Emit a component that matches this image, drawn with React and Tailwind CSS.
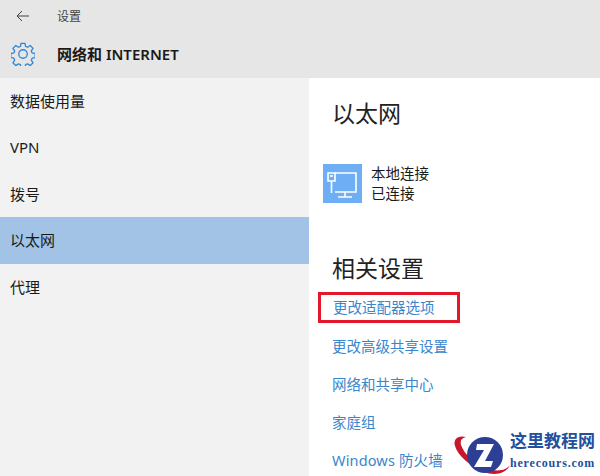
import React from 'react'

const font = { fontFamily: '"Noto Sans", "Noto Sans CJK SC", sans-serif' }

const navItems = ['数据使用量', 'VPN', '拨号', '以太网', '代理']

const GearIcon = () => (
    <svg width="24" height="24" viewBox="0 0 26 26" fill="none" stroke="#2f86d6" strokeWidth="1.4" strokeLinejoin="round">
        <path d="M10.8 1.5h4.4l.6 3.3 2.2.9 2.8-1.9 3.1 3.1-1.9 2.8.9 2.2 3.3.6v4.4l-3.3.6-.9 2.2 1.9 2.8-3.1 3.1-2.8-1.9-2.2.9-.6 3.3h-4.4l-.6-3.3-2.2-.9-2.8 1.9-3.1-3.1 1.9-2.8-.9-2.2-3.3-.6v-4.4l3.3-.6.9-2.2-1.9-2.8 3.1-3.1 2.8 1.9 2.2-.9z" />
        <circle cx="13" cy="13" r="4.6" />
    </svg>
)

const NetworkIcon = () => (
    <div className="w-[39px] h-[39px] bg-[#6eaef5] flex items-center justify-center">
        <svg width="39" height="39" viewBox="0 0 39 39" fill="none" stroke="#fff" strokeWidth="1.6">
            <path d="M12 9h21v19H12" />
            <path d="M5 9h7v8H5z" />
            <path d="M7 12h3" />
            <path d="M8.5 17v12" />
            <path d="M22 28v5M15 33h14" />
        </svg>
    </div>
)

const Logo = () => (
    <div className="absolute right-0 bottom-0 w-[148px] h-[52px] flex items-center">
        <svg width="58" height="52" viewBox="0 0 58 52" className="shrink-0">
            <path d="M14 13C6 11 1 15 3 22c3 10 15 20 29 26 10 4 22 2 26-7-4 6-14 7-24 3C22 39 12 30 9 21c-1-5 1-7 5-8z" fill="#c5182a" />
            <circle cx="33" cy="31" r="18" fill="#2d3f94" />
            <path d="M25 20h17L33 37h8l-2 6H22l10-17h-8z" fill="#fff" />
        </svg>
        <div className="flex flex-col items-center font-['Liberation_Serif','Noto_Sans_CJK_SC',serif]">
            <span className="text-[17px] leading-[24px] font-bold text-[#22509c] whitespace-nowrap">这里教程网</span>
            <span className="text-[12px] leading-[14px] mt-[2px] font-bold text-[#22509c] tracking-[0.8px]">herecours.com</span>
        </div>
    </div>
)

export default function App() {
    return (
        <div className="relative w-[600px] h-[476px] overflow-hidden flex flex-col bg-white text-[#1a1a1a]" style={font}>
            <header className="h-[78px] shrink-0 bg-[#e6e6e6] flex flex-col">
                <div className="h-[32px] flex items-center pl-[16px] gap-[28px]">
                    <svg width="13" height="12" viewBox="0 0 13 12" fill="none" stroke="#444" strokeWidth="1">
                        <path d="M13 6H1M6 1 1 6l5 5" />
                    </svg>
                    <span className="text-[12px] text-[#444] pt-[1px]">设置</span>
                </div>
                <div className="flex-1 flex items-center pl-[11px] gap-[22px] pb-[2px]">
                    <GearIcon />
                    <span className="text-[15px] font-semibold">网络和 INTERNET</span>
                </div>
            </header>
            <div className="flex-1 flex min-h-0">
                <nav className="w-[309px] shrink-0 bg-[#f2f2f2] flex flex-col">
                    {navItems.map((item) => (
                        <div
                            key={item}
                            className={`h-[46.4px] shrink-0 flex items-center pl-[10px] text-[15px] ${item === '以太网' ? 'bg-[#a2c3e6]' : ''}`}
                        >
                            {item}
                        </div>
                    ))}
                </nav>
                <main className="flex-1 pl-[23px] pt-[18px] flex flex-col items-start">
                    <h1 className="text-[23px] leading-[36px] -mt-[1px] text-[#222]">以太网</h1>
                    <div className="flex items-center gap-[9px] mt-[32px] -ml-[9px]">
                        <NetworkIcon />
                        <div className="flex flex-col text-[14.5px] leading-[20px]">
                            <span>本地连接</span>
                            <span>已连接</span>
                        </div>
                    </div>
                    <h2 className="text-[23px] leading-[36px] text-[#222] mt-[47px]">相关设置</h2>
                    <div className="flex flex-col text-[14.5px] text-[#3a86cc] mt-[6px] items-start">
                        <a className="h-[31px] w-[142px] -ml-[14px] pl-[12px] border-[3px] border-[#e2192c] flex items-center">更改适配器选项</a>
                        <a className="mt-[12px] h-[24px] flex items-center">更改高级共享设置</a>
                        <a className="mt-[14px] h-[24px] flex items-center">网络和共享中心</a>
                        <a className="mt-[14px] h-[24px] flex items-center">家庭组</a>
                        <a className="mt-[14px] h-[24px] flex items-center tracking-[0.15px]">Windows 防火墙</a>
                    </div>
                </main>
            </div>
            <Logo />
        </div>
    )
}
